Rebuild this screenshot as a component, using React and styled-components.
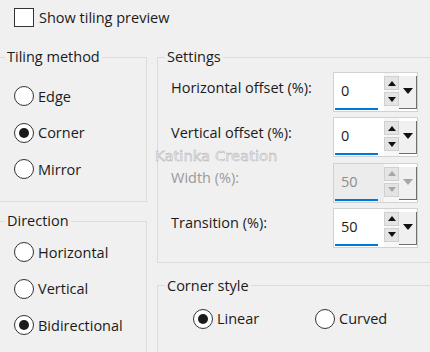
import React from 'react';
import styled, {createGlobalStyle} from 'styled-components';

const Global = createGlobalStyle`
body{
    margin: 0;
    background: #f0f0f0;
}
`

const Page = styled.div`
position: relative;
width: 430px;
height: 352px;
overflow: hidden;
background: #f0f0f0;
font-family: "Open Sans", "Noto Sans", sans-serif;
font-size: 14.5px;
color: #1b1b1b;
`

const TopRow = styled.label`
display: flex;
align-items: center;
gap: 5px;
height: 19px;
padding: 8px 0 0 14px;
`

const CheckBox = styled.span`
width: 20px;
height: 19px;
box-sizing: border-box;
border: 1px solid #333;
background: #fff;
`

const Columns = styled.div`
display: grid;
grid-template-columns: 150px 290px;
column-gap: 10px;
margin: 20px 0 0 -3px;
`

const Column = styled.div`
display: flex;
flex-direction: column;
gap: ${p => p.gap}px;
`

const Group = styled.fieldset`
margin: 0;
min-width: 0;
padding: 0;
border: 1px solid #dcdcdc;
`

const Legend = styled.legend`
margin-left: 7px;
padding: 0 2px;
line-height: 20px;
`

const Body = styled.div`
padding: ${p => p.pad};
`

const RadioList = styled.div`
display: flex;
flex-direction: column;
gap: 16.5px;
`

const RadioLine = styled.div`
display: grid;
grid-template-columns: 122px auto;
`

const RadioRow = styled.div`
display: flex;
align-items: center;
gap: 4px;
height: 20px;
`

const Circle = styled.span`
width: 20px;
height: 20px;
box-sizing: border-box;
border-radius: 50%;
border: 1px solid #333;
background: #fff;
display: flex;
align-items: center;
justify-content: center;

&::after{
    content: '';
    width: 10px;
    height: 10px;
    border-radius: 50%;
    background: #1b1b1b;
    display: ${p => (p.checked ? 'block' : 'none')};
}
`

const Rows = styled.div`
display: flex;
flex-direction: column;
gap: 5.3px;
`

const SetRow = styled.div`
display: grid;
grid-template-columns: 162px 85px;
align-items: center;
height: 40px;
`

const SetLabel = styled.span`
margin-bottom: 10px;
color: ${p => (p.disabled ? '#9a9a9a' : '#1b1b1b')};
`

const Spinner = styled.div`
display: flex;
width: 85px;
height: 40px;
box-sizing: border-box;
border: 1px solid #d2d2d2;
background: #fff;
`

const Field = styled.div`
width: 50px;
padding: 0 6px 1px 1px;
box-sizing: border-box;
background: ${p => (p.disabled ? '#ececec' : '#fff')};
`

const Value = styled.div`
display: flex;
align-items: center;
height: 100%;
box-sizing: border-box;
padding-left: 6px;
border-bottom: 2px solid #0078d7;
color: ${p => (p.disabled ? '#8c8c8c' : '#1b1b1b')};
`

const Steps = styled.div`
display: flex;
flex-direction: column;
gap: 2px;
width: 15px;
padding: 3px 0 5px;
background: #f7f7f7;
`

const Step = styled.div`
flex: 1;
display: flex;
align-items: center;
justify-content: center;
background: #e4e4e4;
border: 1px solid #d0d0d0;
`

const Drop = styled.div`
flex: 1;
display: flex;
align-items: center;
justify-content: center;
margin: 3px 0 2px;
padding-bottom: 2px;
background: #f0f0f0;
border-right: 1px solid #6f6f6f;
border-bottom: 1px solid #6f6f6f;
`

const Watermark = styled.div`
position: absolute;
left: 155px;
top: 147px;
font-family: "DejaVu Sans", sans-serif;
font-size: 14.8px;
color: #f2f2f2;
-webkit-text-stroke: 0.5px #b0b0b0;
pointer-events: none;
`

const Tri = ({up, w, h, color}) => (
    <svg width={w} height={h} viewBox={`0 0 ${w} ${h}`}>
        <polygon points={up ? `0,${h} ${w / 2},0 ${w},${h}` : `0,0 ${w},0 ${w / 2},${h}`} fill={color}/>
    </svg>
)

const Spin = ({value, disabled}) => {
    const c = disabled ? '#a6a6a6' : '#111';
    return (
        <Spinner>
            <Field disabled={disabled}><Value disabled={disabled}>{value}</Value></Field>
            <Steps>
                <Step><Tri up w={8} h={5} color={c}/></Step>
                <Step><Tri w={8} h={5} color={c}/></Step>
            </Steps>
            <Drop><Tri w={10} h={6} color={c}/></Drop>
        </Spinner>
    )
}

const Radio = ({label, checked}) => (
    <RadioRow><Circle checked={checked}/>{label}</RadioRow>
)

const settings = [
    {label: 'Horizontal offset (%):', value: '0'},
    {label: 'Vertical offset (%):', value: '0'},
    {label: 'Width (%):', value: '50', disabled: true},
    {label: 'Transition (%):', value: '50'},
]

export default function App(){
    return(
        <>
        <Global/>
        <Page>
            <TopRow><CheckBox/>Show tiling preview</TopRow>
            <Columns>
                <Column gap={9}>
                    <Group>
                        <Legend>Tiling method</Legend>
                        <Body pad="19px 0 22px 16px">
                            <RadioList>
                                <Radio label="Edge"/>
                                <Radio label="Corner" checked/>
                                <Radio label="Mirror"/>
                            </RadioList>
                        </Body>
                    </Group>
                    <Group>
                        <Legend>Direction</Legend>
                        <Body pad="11px 0 40px 16px">
                            <RadioList>
                                <Radio label="Horizontal"/>
                                <Radio label="Vertical"/>
                                <Radio label="Bidirectional" checked/>
                            </RadioList>
                        </Body>
                    </Group>
                </Column>
                <Column gap={13}>
                    <Group>
                        <Legend>Settings</Legend>
                        <Body pad="5px 0 14px 13px">
                            <Rows>
                                {settings.map(s => (
                                    <SetRow key={s.label}>
                                        <SetLabel disabled={s.disabled}>{s.label}</SetLabel>
                                        <Spin value={s.value} disabled={s.disabled}/>
                                    </SetRow>
                                ))}
                            </Rows>
                        </Body>
                    </Group>
                    <Group>
                        <Legend>Corner style</Legend>
                        <Body pad="13px 0 40px 35px">
                            <RadioLine>
                                <Radio label="Linear" checked/>
                                <Radio label="Curved"/>
                            </RadioLine>
                        </Body>
                    </Group>
                </Column>
            </Columns>
            <Watermark>Katinka Creation</Watermark>
        </Page>
        </>
    )
}
